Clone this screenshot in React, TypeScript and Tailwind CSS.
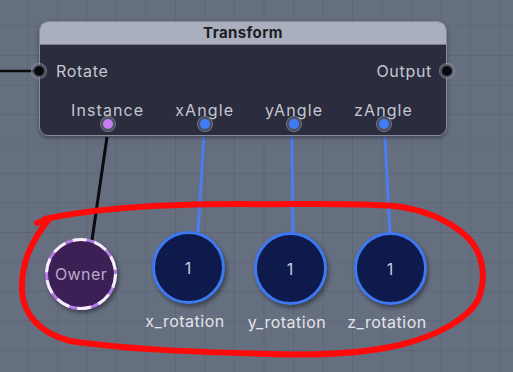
import React from "react";

type PortColor = "black" | "purple" | "blue";

const portFill: Record<PortColor, string> = {
  black: "bg-[#0b0b0f]",
  purple: "bg-[#c77df2]",
  blue: "bg-[#3f7cf6]",
};

function Port({ color, className }: { color: PortColor; className: string }) {
  return (
    <span
      className={`absolute w-[14px] h-[14px] rounded-full bg-[#5d6170]/70 ring-1 ring-[#9ea3b1]/60 flex items-center justify-center ${className}`}
    >
      <span className={`w-[10px] h-[10px] rounded-full ${portFill[color]}`} />
    </span>
  );
}

const inputs = ["Instance", "xAngle", "yAngle", "zAngle"];

const valueNodes = [
  { label: "x_rotation", left: "left-[143px]", top: "top-[231px]" },
  { label: "y_rotation", left: "left-[245px]", top: "top-[232px]" },
  { label: "z_rotation", left: "left-[345px]", top: "top-[232px]" },
];

function TransformNode() {
  return (
    <div className="absolute left-[39px] top-[21px] w-[408px] h-[115px] rounded-[9px] border border-[#868c9b] bg-[#2b2c3e] shadow-[0_2px_4px_rgba(0,0,0,0.35)]">
      {/* Header */}
      <div className="h-[23px] rounded-t-[8px] bg-[#a9afbd] border-b border-[#7b8191] flex items-center justify-center">
        <span className="text-[15px] font-bold tracking-[0.4px] text-[#1c1d24]">Transform</span>
      </div>

      {/* Rotate / Output */}
      <div className="relative mt-[16px] h-[20px] pl-[16px] pr-[14px] flex items-center justify-between text-[16px] tracking-[0.7px] text-[#c5c7d0]">
        <span>Rotate</span>
        <span>Output</span>
        <Port color="black" className="left-[-8px] top-[3px]" />
        <Port color="black" className="right-[-8px] top-[3px]" />
      </div>

      {/* Inputs */}
      <div className="mt-[19px] h-[20px] pl-[31px] flex items-center gap-[31px] text-[16px] tracking-[1.1px] text-[#c5c7d0]">
        {inputs.map((name, i) => (
          <span key={name} className="relative">
            {name}
            <Port
              color={i === 0 ? "purple" : "blue"}
              className="left-1/2 -translate-x-1/2 top-[19px]"
            />
          </span>
        ))}
      </div>
    </div>
  );
}

export default function App() {
  return (
    <div
      className="relative w-[513px] h-[372px] overflow-hidden bg-[#666f80] bg-[image:linear-gradient(to_right,rgba(40,45,60,0.13)_1px,transparent_1px),linear-gradient(to_bottom,rgba(40,45,60,0.13)_1px,transparent_1px)] bg-[size:29.5px_29.5px] bg-[position:-2px_-4px]"
      style={{ fontFamily: "Inter, 'Noto Sans', sans-serif" }}
    >
      {/* Wires */}
      <svg className="absolute inset-0" width="513" height="372">
        <line x1="0" y1="71" x2="34" y2="71" stroke="#0b0b0f" strokeWidth="2.5" />
        <line x1="107" y1="137" x2="92" y2="240" stroke="#0b0b0f" strokeWidth="3" />
        <line x1="204" y1="137" x2="198" y2="232" stroke="#4a7df2" strokeWidth="3" />
        <line x1="292" y1="137" x2="293" y2="233" stroke="#4a7df2" strokeWidth="3" />
        <line x1="385" y1="137" x2="390" y2="233" stroke="#4a7df2" strokeWidth="3" />
      </svg>

      <TransformNode />

      {/* Owner node */}
      <div className="absolute left-[45px] top-[238px] w-[72px] h-[72px] rounded-full bg-[#3b1f55] border-[3px] border-[#b77be6] shadow-[2px_3px_4px_rgba(0,0,0,0.4)] flex items-center justify-center">
        <svg className="absolute -inset-[3px]" width="72" height="72" viewBox="0 0 72 72">
          <circle
            cx="36"
            cy="36"
            r="34.5"
            fill="none"
            stroke="#f4f0f8"
            strokeWidth="3"
            strokeDasharray="14 8"
          />
        </svg>
        <span className="text-[16px] tracking-[0.4px] text-[#b9a9cb]">Owner</span>
      </div>

      {/* Float value nodes */}
      {valueNodes.map((n) => (
        <div key={n.label} className={`absolute ${n.left} ${n.top} w-[90px] flex flex-col items-center`}>
          <div className="w-[73px] h-[73px] rounded-full bg-[#0e1a4b] border-[3px] border-[#3d79f1] shadow-[2px_3px_4px_rgba(0,0,0,0.4)] flex items-center justify-center">
            <span className="text-[16px] text-[#c6cbe0]">1</span>
          </div>
          <span className="relative -left-[3px] mt-[5px] text-[16px] tracking-[0.5px] text-[#e3e5ec] whitespace-nowrap">{n.label}</span>
        </div>
      ))}

      {/* Annotation */}
      <svg className="absolute inset-0" width="513" height="372">
        <path
          d="M 37 223 L 50 218 C 32 240 21 262 22 290 C 23 315 40 333 70 341 C 130 350 200 352 270 354 C 330 356 370 352 400 345 C 440 335 468 318 478 300 C 488 275 482 250 465 235 C 448 220 425 210 395 206 C 340 202 290 205 240 204 C 170 204 100 207 45 219"
          fill="none"
          stroke="#ff0a0a"
          strokeWidth="6"
          strokeLinecap="round"
          strokeLinejoin="round"
        />
      </svg>
    </div>
  );
}
